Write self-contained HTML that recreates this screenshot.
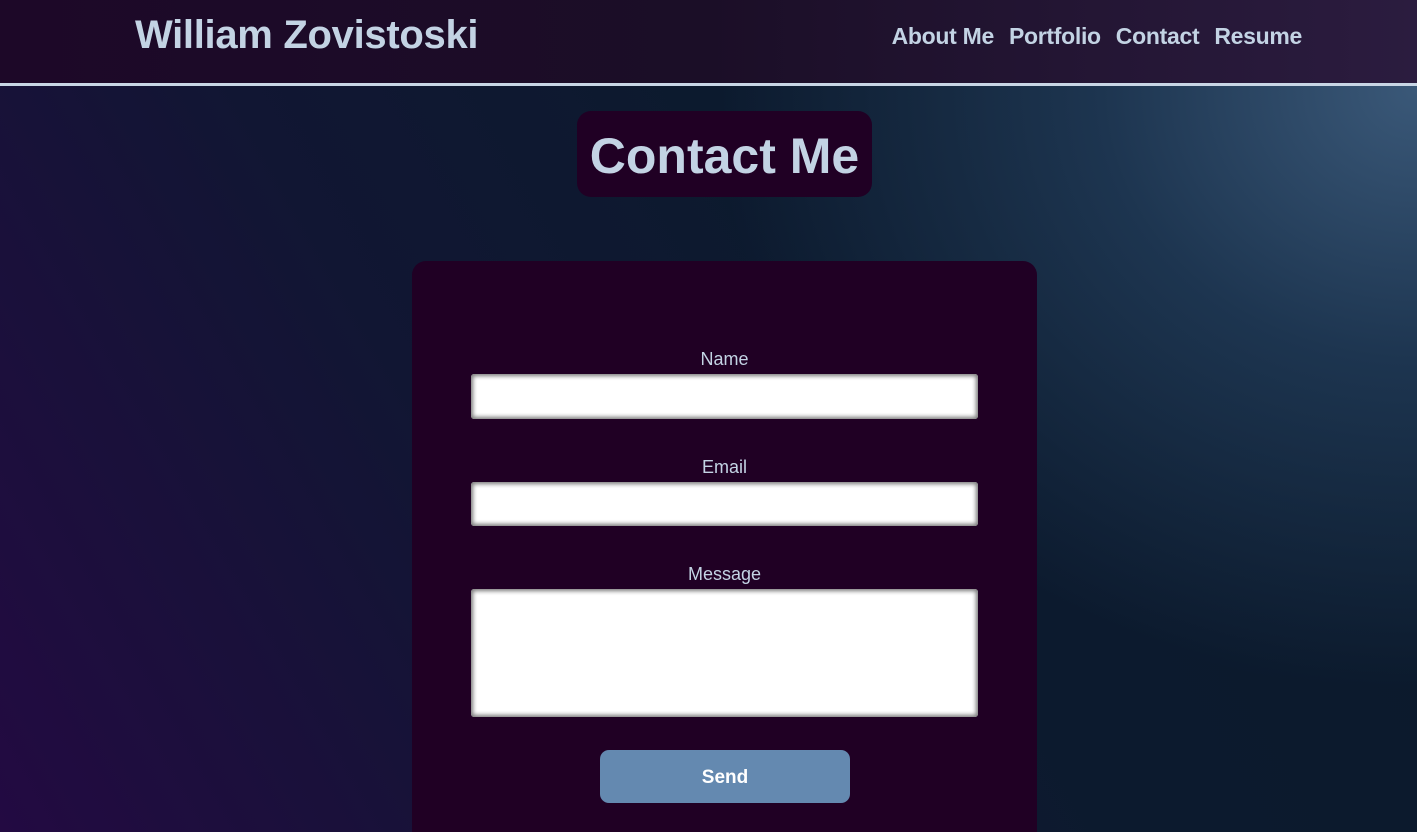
<!DOCTYPE html>
<html><head><style>
*{margin:0;padding:0;box-sizing:border-box}
html,body{width:1417px;height:832px;overflow:hidden}
body{font-family:"Liberation Sans",sans-serif;color:#c3d3e4;
background:radial-gradient(ellipse 700px 600px at 1417px 90px,#3a5878 0%,#1d3550 45%,transparent 100%),
linear-gradient(60deg,#230a42 0%,#111633 35%,#0c1a2e 60%,#0b1a2b 100%);position:relative}
header{position:absolute;left:0;top:0;width:1417px;height:86px;background:linear-gradient(90deg,#1d0828,#1b0e27 50%,#2b1c3f);border-bottom:3px solid #c8d6e5}
.name{position:absolute;left:135px;top:13px;font-size:40px;font-weight:bold;letter-spacing:-0.3px}
nav{position:absolute;right:115px;top:23px;font-size:23px;font-weight:bold;letter-spacing:-0.3px}
nav span{margin-left:15px}
.title{position:absolute;left:577px;top:111px;width:295px;height:86px;background:#200024;border-radius:14px;text-align:center;font-size:50px;font-weight:bold;line-height:90px}
.card{position:absolute;left:412px;top:261px;width:625px;height:571px;background:#200024;border-radius:14px 14px 0 0}
label{position:absolute;width:625px;left:412px;text-align:center;font-size:18px}
.in{position:absolute;left:471px;width:507px;background:#fff;border-radius:3px;box-shadow:inset 0 0 4px 2px #777}
.btn{position:absolute;left:600px;top:750px;width:250px;height:53px;background:#6489b0;border-radius:9px;color:#fff;font-weight:bold;font-size:19px;text-align:center;line-height:55px}
</style></head><body>
<header><div class="name">William Zovistoski</div>
<nav><span>About Me</span><span>Portfolio</span><span>Contact</span><span>Resume</span></nav></header>
<div class="title">Contact Me</div>
<div class="card"></div>
<label style="top:349px">Name</label>
<div class="in" style="top:374px;height:45px"></div>
<label style="top:457px">Email</label>
<div class="in" style="top:482px;height:44px"></div>
<label style="top:564px">Message</label>
<div class="in" style="top:589px;height:128px"></div>
<div class="btn">Send</div>
</body></html>
